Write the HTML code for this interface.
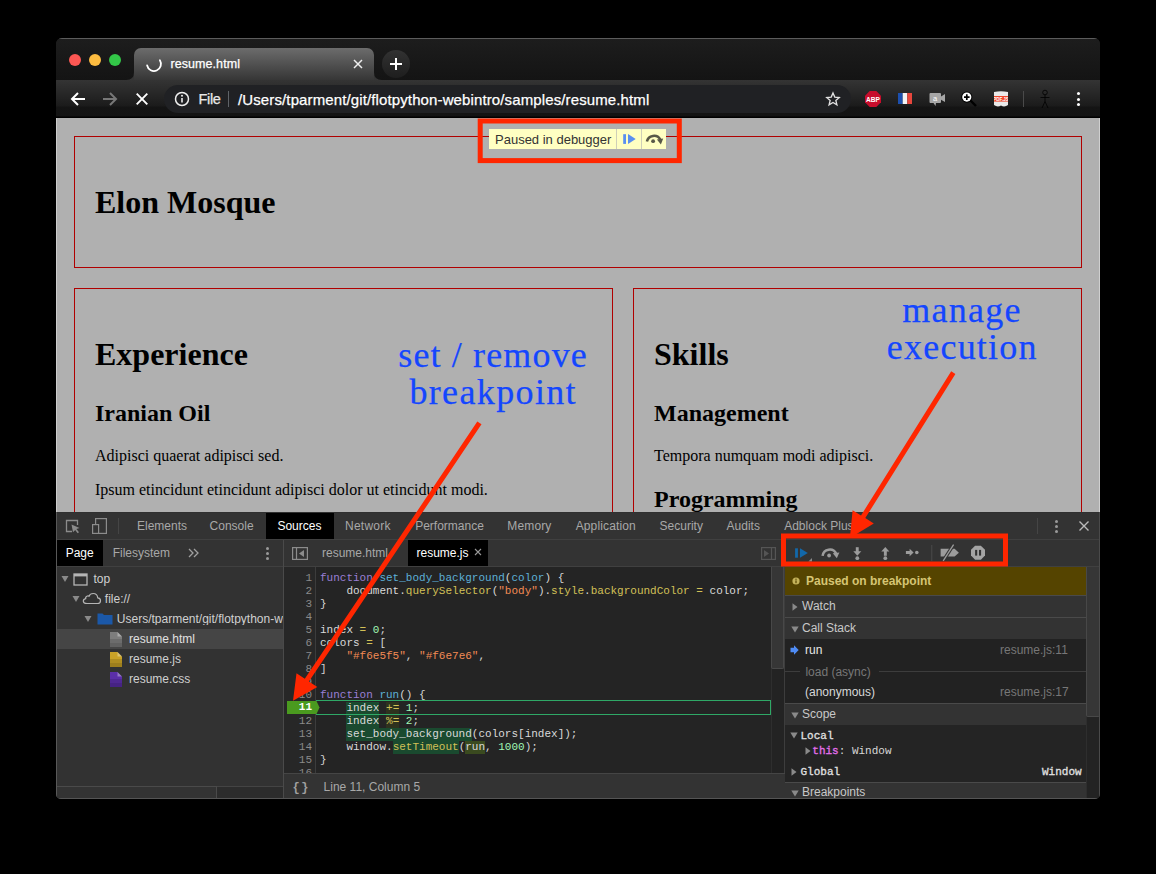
<!DOCTYPE html>
<html>
<head>
<meta charset="utf-8">
<title>resume.html</title>
<style>
*{box-sizing:border-box;margin:0;padding:0}
html,body{width:1156px;height:874px;background:#000;overflow:hidden}
body{position:relative;font-family:"Liberation Sans",sans-serif}
#win{position:absolute;left:56px;top:38px;width:1044px;height:761px;border-radius:6px 6px 5px 5px;overflow:hidden;background:#1c1c1c}
.abs{position:absolute}
.t{position:absolute;white-space:pre;line-height:1}
#code{font-family:"Liberation Mono",monospace;font-size:11px;line-height:13px}
.ln{position:absolute;left:0;width:28px;text-align:right;color:#8a8a8a;white-space:pre}
.cl{position:absolute;left:36px;white-space:pre;color:#d5d5d5}
.cl span{display:inline-block;height:13px}
</style>
</head>
<body>
<div id="win">
<div class="abs" style="left:0px;top:0px;width:1044px;height:42px;background:linear-gradient(#1d1d1d,#141414);border-top:1px solid #5c5c5c"></div>
<div class="abs" style="left:13px;top:16px;width:12px;height:12px;border-radius:50%;background:#fc5753"></div>
<div class="abs" style="left:33px;top:16px;width:12px;height:12px;border-radius:50%;background:#fdbc40"></div>
<div class="abs" style="left:53px;top:16px;width:12px;height:12px;border-radius:50%;background:#33c748"></div>
<div class="abs" style="left:78px;top:10px;width:240px;height:32px;border-radius:7px 7px 0 0;background:linear-gradient(#6c6c6c,#363636)"></div>
<svg class="abs" style="left:70px;top:34px;" width="8" height="8" viewBox="0 0 8 8"><path d="M0 8 Q8 8 8 0 V8 Z" fill="#353535"/></svg>
<svg class="abs" style="left:318px;top:34px;" width="8" height="8" viewBox="0 0 8 8"><path d="M8 8 Q0 8 0 0 V8 Z" fill="#353535"/></svg>
<svg class="abs" style="left:89px;top:17px;" width="18" height="18" viewBox="0 0 18 18"><path d="M14.87 5.19 A7 7 0 1 1 2.15 10.46" fill="none" stroke="#fff" stroke-width="1.8" stroke-linecap="round"/></svg>
<div class="t" id="tabtitle" style="left:114.5px;top:19.72px;font-size:12.5px;font-family:'Liberation Sans',sans-serif;color:#fff;letter-spacing:0.065px;-webkit-text-stroke:0.25px #fff;">resume.html</div>
<svg class="abs" style="left:297px;top:21px;" width="10" height="10" viewBox="0 0 10 10"><path d="M1 1 L9 9 M9 1 L1 9" stroke="#eee" stroke-width="1.5" fill="none"/></svg>
<div class="abs" style="left:326px;top:12px;width:28px;height:28px;border-radius:50%;background:linear-gradient(#323232,#1e1e1e)"></div>
<svg class="abs" style="left:334px;top:20px;" width="12" height="12" viewBox="0 0 12 12"><path d="M6 0 V12 M0 6 H12" stroke="#fff" stroke-width="2" fill="none"/></svg>
<div class="abs" style="left:0px;top:42px;width:1044px;height:38px;background:linear-gradient(#343434 0,#1b1b1b 26px,#141414 27px,#131313 36px,#000 37px)"></div>
<svg class="abs" style="left:14px;top:53px;" width="16" height="16" viewBox="0 0 16 16"><path d="M15 8 H2 M8 2 L2 8 L8 14" stroke="#fff" stroke-width="2" fill="none"/></svg>
<svg class="abs" style="left:46px;top:53px;" width="16" height="16" viewBox="0 0 16 16"><path d="M1 8 H14 M8 2 L14 8 L8 14" stroke="#777" stroke-width="2" fill="none"/></svg>
<svg class="abs" style="left:80px;top:55px;" width="12" height="12" viewBox="0 0 12 12"><path d="M0.7 0.7 L11.3 11.3 M11.3 0.7 L0.7 11.3" stroke="#fff" stroke-width="1.9" fill="none"/></svg>
<div class="abs" style="left:108px;top:47px;width:687px;height:28px;border-radius:14px;background:#202124"></div>
<svg class="abs" style="left:118px;top:53px;" width="16" height="16" viewBox="0 0 16 16"><circle cx="8" cy="8" r="6.5" fill="none" stroke="#eee" stroke-width="1.5"/><path d="M8 7 V11.5" stroke="#eee" stroke-width="1.6"/><circle cx="8" cy="4.8" r="1" fill="#eee"/></svg>
<div class="t" id="file" style="left:142.5px;top:54.03px;font-size:14.5px;font-family:'Liberation Sans',sans-serif;color:#e8e8e8;letter-spacing:-0.344px;-webkit-text-stroke:0.25px #e8e8e8;">File</div>
<div class="abs" style="left:172px;top:53px;width:1px;height:16px;background:#5f6368"></div>
<div class="t" id="url" style="left:182px;top:53.60px;font-size:15px;font-family:'Liberation Sans',sans-serif;color:#fff;letter-spacing:0.120px;-webkit-text-stroke:0.25px #fff;">/Users/tparment/git/flotpython-webintro/samples/resume.html</div>
<svg class="abs" style="left:769px;top:53px;" width="16" height="16" viewBox="0 0 18 18"><path d="M9 2.2 L11 6.9 L16 7.3 L12.2 10.6 L13.4 15.6 L9 12.9 L4.6 15.6 L5.8 10.6 L2 7.3 L7 6.9 Z" fill="none" stroke="#e0e0e0" stroke-width="1.5"/></svg>
<svg class="abs" style="left:809px;top:53px;" width="16" height="16" viewBox="0 0 16 16"><path d="M4.7 0 H11.3 L16 4.7 V11.3 L11.3 16 H4.7 L0 11.3 V4.7 Z" fill="#c70d2c"/><text x="8" y="10.6" font-family="Liberation Sans" font-weight="bold" font-size="6.6" fill="#fff" text-anchor="middle">ABP</text></svg>
<svg class="abs" style="left:842px;top:55px;" width="14" height="11" viewBox="0 0 14 11"><rect x="0" y="0" width="4.7" height="11" fill="#1c4fae"/><rect x="4.7" y="0" width="4.6" height="11" fill="#f4f4f4"/><rect x="9.3" y="0" width="4.7" height="11" fill="#e8463c"/></svg>
<svg class="abs" style="left:873px;top:54px;" width="17" height="15" viewBox="0 0 17 15"><path d="M1.5 1 H11 Q12 1 12 2 V4.5 L16 2 V10 L12 7.8 V10 Q12 11 11 11 H7 L6.5 14 L4.5 11 H1.5 Q0.5 11 0.5 10 V2 Q0.5 1 1.5 1 Z" fill="#a6a6a6"/><text x="6.2" y="8.6" font-family="Liberation Sans" font-size="7.5" fill="#fff" text-anchor="middle">a</text></svg>
<svg class="abs" style="left:903px;top:51px;" width="20" height="20" viewBox="0 0 20 20"><path d="M11.5 11.5 L17 17" stroke="#000" stroke-width="2.4"/><circle cx="7.8" cy="8.1" r="5.6" fill="#000"/><circle cx="7.8" cy="8.1" r="4.6" fill="#fff"/><path d="M7.8 5.3 V10.9 M5 8.1 H10.6" stroke="#000" stroke-width="1.7"/></svg>
<svg class="abs" style="left:938px;top:53px;" width="14" height="16" viewBox="0 0 14 16"><path d="M0 1 Q7 -0.5 14 1 V14 Q10.5 16.5 7 14.5 Q3.5 16.5 0 14 Z" fill="#e9e9e9"/><rect x="0" y="5" width="14" height="5.6" fill="#f0452a"/><text x="7" y="9.5" font-family="Liberation Sans" font-weight="bold" font-size="4.6" fill="#fff" text-anchor="middle">PDF.JS</text></svg>
<div class="abs" style="left:967px;top:53px;width:1px;height:16px;background:#4a4a4a"></div>
<svg class="abs" style="left:983px;top:51px;" width="12" height="20" viewBox="0 0 12 20"><circle cx="6" cy="3.5" r="2.3" fill="none" stroke="#000" stroke-width="0.8"/><path d="M6 6 V12.5 M1.5 8.5 H10.5 M6 12.5 L3 19 M6 12.5 L9 19" stroke="#000" stroke-width="0.8" fill="none"/></svg>
<div class="abs" style="left:1021px;top:54px;width:3px;height:3px;border-radius:50%;background:#fff"></div>
<div class="abs" style="left:1021px;top:59.5px;width:3px;height:3px;border-radius:50%;background:#fff"></div>
<div class="abs" style="left:1021px;top:65px;width:3px;height:3px;border-radius:50%;background:#fff"></div>
<div class="abs" style="left:0px;top:80px;width:1044px;height:394px;background:#b0b0b0"></div>
<div class="abs" style="left:18px;top:98px;width:1008px;height:132px;border:1px solid #b00000;"></div>
<div class="abs" style="left:18px;top:250px;width:539px;height:240px;border:1px solid #b00000;"></div>
<div class="abs" style="left:577px;top:250px;width:449px;height:240px;border:1px solid #b00000;"></div>
<div class="t" id="h_elon" style="left:39px;top:148.00px;font-size:32px;font-family:'Liberation Serif',serif;color:#000;font-weight:bold;">Elon Mosque</div>
<div class="t" id="h_exp" style="left:39px;top:299.60px;font-size:32px;font-family:'Liberation Serif',serif;color:#000;font-weight:bold;">Experience</div>
<div class="t" id="h_iran" style="left:39px;top:362.90px;font-size:24px;font-family:'Liberation Serif',serif;color:#000;font-weight:bold;">Iranian Oil</div>
<div class="t" id="p_adip" style="left:39px;top:409.80px;font-size:16px;font-family:'Liberation Serif',serif;color:#000;">Adipisci quaerat adipisci sed.</div>
<div class="t" id="p_ipsum" style="left:39px;top:443.90px;font-size:16px;font-family:'Liberation Serif',serif;color:#000;">Ipsum etincidunt etincidunt adipisci dolor ut etincidunt modi.</div>
<div class="t" id="h_skills" style="left:598px;top:299.60px;font-size:32px;font-family:'Liberation Serif',serif;color:#000;font-weight:bold;">Skills</div>
<div class="t" id="h_mgmt" style="left:598px;top:362.90px;font-size:24px;font-family:'Liberation Serif',serif;color:#000;font-weight:bold;">Management</div>
<div class="t" id="p_temp" style="left:598px;top:409.80px;font-size:16px;font-family:'Liberation Serif',serif;color:#000;">Tempora numquam modi adipisci.</div>
<div class="t" id="h_prog" style="left:598px;top:448.70px;font-size:24px;font-family:'Liberation Serif',serif;color:#000;font-weight:bold;">Programming</div>
<div class="abs" style="left:1043px;top:80px;width:1px;height:394px;background:#cfcfcf"></div>
<div class="abs" style="left:433.3px;top:90.7px;width:177.1px;height:20.4px;background:#ffffc2"></div>
<div class="t" id="paused" style="left:439px;top:94.60px;font-size:13px;font-family:'Liberation Sans',sans-serif;color:#333;">Paused in debugger</div>
<div class="abs" style="left:560.1px;top:90.7px;width:1px;height:20.4px;background:#cfcfb8"></div>
<div class="abs" style="left:585px;top:90.7px;width:1px;height:20.4px;background:#cfcfb8"></div>
<svg class="abs" style="left:560px;top:90px" width="52" height="22" viewBox="616 128 52 22"><rect x="623.2" y="134.2" width="2.8" height="9.7" fill="#5a8ff0"/><path d="M628 134.1 L635.7 139 L628 143.9 Z" fill="#5a8ff0"/><path d="M646.9 141.6 A7.2 7.2 0 0 1 660.3 139.6" fill="none" stroke="#585848" stroke-width="2.5"/><path d="M656.9 139.6 L663.2 138.6 L660.9 144.4 Z" fill="#585848"/><circle cx="653.1" cy="141.2" r="1.9" fill="#585848"/></svg>
<div class="abs" style="left:0px;top:474px;width:1044px;height:287px;background:#242424"></div>
<div class="abs" style="left:0px;top:474px;width:1044px;height:28px;background:#333333;border-top:1px solid #303030;border-bottom:1px solid #404040"></div>
<svg class="abs" style="left:9px;top:480px;" width="16" height="16" viewBox="0 0 16 16"><path d="M7 13.5 H1.5 V2.5 H12.5 V7" fill="none" stroke="#8c8c8c" stroke-width="1.3"/><path d="M6.5 6.5 L14.5 10 L11.4 11 L14 14.3 L12.6 15.3 L10.2 12 L8 14.2 Z" fill="#8c8c8c"/></svg>
<svg class="abs" style="left:35px;top:479px;" width="17" height="18" viewBox="0 0 17 18"><rect x="4.6" y="1.6" width="10.8" height="14.8" fill="none" stroke="#8c8c8c" stroke-width="1.2"/><rect x="1.6" y="7.6" width="6" height="8.8" fill="#333" stroke="#8c8c8c" stroke-width="1.2"/></svg>
<div class="abs" style="left:62px;top:480px;width:1px;height:16px;background:#454545"></div>
<div class="t" id="mt0" style="left:81px;top:481.64px;font-size:12px;font-family:'Liberation Sans',sans-serif;color:#a8a8a8;">Elements</div>
<div class="t" id="mt1" style="left:153.6px;top:481.64px;font-size:12px;font-family:'Liberation Sans',sans-serif;color:#a8a8a8;">Console</div>
<div class="t" id="mt2" style="left:289.1px;top:481.64px;font-size:12px;font-family:'Liberation Sans',sans-serif;color:#a8a8a8;letter-spacing:0.212px;">Network</div>
<div class="t" id="mt3" style="left:359.2px;top:481.64px;font-size:12px;font-family:'Liberation Sans',sans-serif;color:#a8a8a8;">Performance</div>
<div class="t" id="mt4" style="left:451.3px;top:481.64px;font-size:12px;font-family:'Liberation Sans',sans-serif;color:#a8a8a8;letter-spacing:0.143px;">Memory</div>
<div class="t" id="mt5" style="left:519.7px;top:481.64px;font-size:12px;font-family:'Liberation Sans',sans-serif;color:#a8a8a8;letter-spacing:0.126px;">Application</div>
<div class="t" id="mt6" style="left:603.6px;top:481.64px;font-size:12px;font-family:'Liberation Sans',sans-serif;color:#a8a8a8;">Security</div>
<div class="t" id="mt7" style="left:670.6px;top:481.64px;font-size:12px;font-family:'Liberation Sans',sans-serif;color:#a8a8a8;">Audits</div>
<div class="t" id="mt8" style="left:728.2px;top:481.64px;font-size:12px;font-family:'Liberation Sans',sans-serif;color:#a8a8a8;">Adblock Plus</div>
<div class="abs" style="left:210px;top:475px;width:68px;height:26px;background:#000"></div>
<div class="t" id="mt_src" style="left:221.4px;top:481.64px;font-size:12px;font-family:'Liberation Sans',sans-serif;color:#fff;">Sources</div>
<div class="abs" style="left:981px;top:480px;width:1px;height:16px;background:#454545"></div>
<div class="abs" style="left:998.5px;top:481.5px;width:3px;height:3px;border-radius:50%;background:#9a9a9a"></div>
<div class="abs" style="left:998.5px;top:486.5px;width:3px;height:3px;border-radius:50%;background:#9a9a9a"></div>
<div class="abs" style="left:998.5px;top:491.5px;width:3px;height:3px;border-radius:50%;background:#9a9a9a"></div>
<svg class="abs" style="left:1022px;top:482px;" width="12" height="12" viewBox="0 0 12 12"><path d="M1.5 1.5 L10.5 10.5 M10.5 1.5 L1.5 10.5" stroke="#bbb" stroke-width="1.4" fill="none"/></svg>
<div class="abs" style="left:0px;top:502px;width:1044px;height:27px;background:#333333;border-bottom:1px solid #404040"></div>
<div class="abs" style="left:0px;top:502px;width:47px;height:26px;background:#000"></div>
<div class="t" id="nt_page" style="left:9.7px;top:509.14px;font-size:12px;font-family:'Liberation Sans',sans-serif;color:#fff;">Page</div>
<div class="t" id="nt_fs" style="left:56.7px;top:509.14px;font-size:12px;font-family:'Liberation Sans',sans-serif;color:#a8a8a8;">Filesystem</div>
<svg class="abs" style="left:132px;top:510px;" width="11" height="10" viewBox="0 0 11 10"><path d="M1 1 L5 5 L1 9 M6 1 L10 5 L6 9" stroke="#a0a0a0" stroke-width="1.3" fill="none"/></svg>
<div class="abs" style="left:210px;top:508.5px;width:3px;height:3px;border-radius:50%;background:#9a9a9a"></div>
<div class="abs" style="left:210px;top:513.5px;width:3px;height:3px;border-radius:50%;background:#9a9a9a"></div>
<div class="abs" style="left:210px;top:518.5px;width:3px;height:3px;border-radius:50%;background:#9a9a9a"></div>
<div class="abs" style="left:0px;top:529px;width:227px;height:232px;background:#323232"></div>
<div class="abs" style="left:227px;top:502px;width:1px;height:259px;background:#4a4a4a"></div>
<div class="abs" style="left:0px;top:591px;width:227px;height:20px;background:#454545"></div>
<svg class="abs" style="left:5px;top:537px;" width="8" height="8" viewBox="0 0 8 8"><path d="M0.5 1 H7.5 L4 7 Z" fill="#8a8a8a"/></svg>
<svg class="abs" style="left:17px;top:535px;" width="15" height="13" viewBox="0 0 15 13"><rect x="1" y="1" width="13" height="11" fill="none" stroke="#b5b5b5" stroke-width="1.3"/><rect x="1" y="1" width="13" height="2.4" fill="#b5b5b5"/></svg>
<div class="t" id="tr_top" style="left:37.4px;top:535.14px;font-size:12px;font-family:'Liberation Sans',sans-serif;color:#d0d0d0;">top</div>
<svg class="abs" style="left:16px;top:557px;" width="8" height="8" viewBox="0 0 8 8"><path d="M0.5 1 H7.5 L4 7 Z" fill="#8a8a8a"/></svg>
<svg class="abs" style="left:26px;top:553px;" width="20" height="14" viewBox="0 0 20 14"><path d="M5 12.5 H15.5 Q18.5 12.5 18.5 9.7 Q18.5 7 15.7 6.8 Q15.3 2.5 11.2 2.5 Q8 2.5 7 5.2 Q6.3 4.8 5.4 5 Q3.3 5.5 3.7 7.6 Q1.3 8 1.3 10.2 Q1.5 12.5 5 12.5 Z" fill="none" stroke="#b5b5b5" stroke-width="1.2"/></svg>
<div class="t" id="tr_file" style="left:48.8px;top:555.14px;font-size:12px;font-family:'Liberation Sans',sans-serif;color:#d0d0d0;">file://</div>
<svg class="abs" style="left:28px;top:577px;" width="8" height="8" viewBox="0 0 8 8"><path d="M0.5 1 H7.5 L4 7 Z" fill="#8a8a8a"/></svg>
<svg class="abs" style="left:41px;top:574px;" width="16" height="13" viewBox="0 0 16 13"><path d="M0.5 1.5 H5.5 L7 3 H15.5 V12.5 H0.5 Z" fill="#1b58a8"/></svg>
<div class="t" id="tr_users" style="left:60.8px;top:575.14px;font-size:12px;font-family:'Liberation Sans',sans-serif;color:#d0d0d0;width:166px;overflow:hidden;">Users/tparment/git/flotpython-webintro/samples</div>
<svg class="abs" style="left:54px;top:593.5px;" width="12" height="15" viewBox="0 0 12 15"><path d="M0 0 H7.5 L12 4.5 V15 H0 Z" fill="#7d7d7d"/><path d="M0 7 H12 V15 H0 Z" fill="#000" fill-opacity="0.13"/><path d="M0 11 H12 V15 H0 Z" fill="#000" fill-opacity="0.1"/><path d="M7.5 0 V4.5 H12 Z" fill="#fff" fill-opacity="0.35"/></svg>
<div class="t" id="tr_html" style="left:73px;top:595.14px;font-size:12px;font-family:'Liberation Sans',sans-serif;color:#e0e0e0;">resume.html</div>
<svg class="abs" style="left:54px;top:613.5px;" width="12" height="15" viewBox="0 0 12 15"><path d="M0 0 H7.5 L12 4.5 V15 H0 Z" fill="#c9a227"/><path d="M0 7 H12 V15 H0 Z" fill="#000" fill-opacity="0.13"/><path d="M0 11 H12 V15 H0 Z" fill="#000" fill-opacity="0.1"/><path d="M7.5 0 V4.5 H12 Z" fill="#fff" fill-opacity="0.35"/></svg>
<div class="t" id="tr_js" style="left:73px;top:615.14px;font-size:12px;font-family:'Liberation Sans',sans-serif;color:#d0d0d0;">resume.js</div>
<svg class="abs" style="left:54px;top:633.5px;" width="12" height="15" viewBox="0 0 12 15"><path d="M0 0 H7.5 L12 4.5 V15 H0 Z" fill="#5b2fa8"/><path d="M0 7 H12 V15 H0 Z" fill="#000" fill-opacity="0.13"/><path d="M0 11 H12 V15 H0 Z" fill="#000" fill-opacity="0.1"/><path d="M7.5 0 V4.5 H12 Z" fill="#fff" fill-opacity="0.35"/></svg>
<div class="t" id="tr_css" style="left:73px;top:635.14px;font-size:12px;font-family:'Liberation Sans',sans-serif;color:#d0d0d0;">resume.css</div>
<div class="abs" style="left:0px;top:748px;width:227px;height:13px;background:#2c2c2c;border-top:1px solid #444"></div>
<div class="abs" style="left:0px;top:748px;width:161px;height:13px;background:#333;border-top:1px solid #4a4a4a;border-right:1px solid #4a4a4a"></div>
<svg class="abs" style="left:236px;top:509px;" width="16" height="13" viewBox="0 0 16 13"><rect x="0.6" y="0.6" width="14.8" height="11.8" fill="none" stroke="#8c8c8c" stroke-width="1.2"/><path d="M4.5 0.6 V12.4" stroke="#8c8c8c" stroke-width="1.2"/><path d="M12 3 V10 L7 6.5 Z" fill="#8c8c8c"/></svg>
<div class="t" id="ft_html" style="left:266px;top:509.14px;font-size:12px;font-family:'Liberation Sans',sans-serif;color:#a8a8a8;">resume.html</div>
<div class="abs" style="left:352px;top:502px;width:80px;height:26px;background:#000"></div>
<div class="t" id="ft_js" style="left:360.5px;top:509.14px;font-size:12px;font-family:'Liberation Sans',sans-serif;color:#fff;">resume.js</div>
<svg class="abs" style="left:418px;top:510px;" width="8" height="8" viewBox="0 0 8 8"><path d="M1 1 L7 7 M7 1 L1 7" stroke="#999" stroke-width="1.1" fill="none"/></svg>
<svg class="abs" style="left:705px;top:509px;" width="15" height="13" viewBox="0 0 15 13"><rect x="0.6" y="0.6" width="13.8" height="11.8" fill="none" stroke="#555" stroke-width="1.2"/><path d="M10.5 0.6 V12.4" stroke="#555" stroke-width="1.2"/><path d="M3 3 V10 L8 6.5 Z" fill="#555"/></svg>
<div class="abs" style="left:228px;top:529px;width:487px;height:206px;background:#242424"></div>
<div class="abs" style="left:228px;top:529px;width:32px;height:206px;background:#272727;border-right:1px solid #3c3c3c"></div>
<div class="abs" style="left:715px;top:529px;width:14px;height:206px;background:#232323;border-left:1px solid #2e2e2e"></div>
<div class="abs" style="left:715px;top:529px;width:13px;height:101.5px;background:#363636;border:1px solid #484848;border-top:none;border-radius:0 0 2px 2px"></div>
<div class="abs" style="left:728px;top:502px;width:1px;height:259px;background:#3d3d3d"></div>
<div class="abs" id="code" style="left:228px;top:529px;width:487px;height:206px;overflow:hidden"><div class="ln" style="top:4.5px">1</div><div class="cl" style="top:4.5px"><span style="color:#9a7fd5;">function</span><span style="color:#d5d5d5;"> </span><span style="color:#5db0d7;">set_body_background</span><span style="color:#d5d5d5;">(</span><span style="color:#5db0d7;">color</span><span style="color:#d5d5d5;">) {</span></div><div class="ln" style="top:17.5px">2</div><div class="cl" style="top:17.5px"><span style="color:#d9d9d9;">    document</span><span style="color:#d5d5d5;">.</span><span style="color:#d2c057;">querySelector</span><span style="color:#d5d5d5;">(</span><span style="color:#f28b54;">"body"</span><span style="color:#d5d5d5;">).</span><span style="color:#d2c057;">style</span><span style="color:#d5d5d5;">.</span><span style="color:#d2c057;">backgroundColor</span><span style="color:#d5d5d5;"> </span><span style="color:#d2c057;">=</span><span style="color:#d9d9d9;"> color;</span></div><div class="ln" style="top:30.5px">3</div><div class="cl" style="top:30.5px"><span style="color:#d5d5d5;">}</span></div><div class="ln" style="top:43.5px">4</div><div class="cl" style="top:43.5px"></div><div class="ln" style="top:56.5px">5</div><div class="cl" style="top:56.5px"><span style="color:#d9d9d9;">index </span><span style="color:#d2c057;">=</span><span style="color:#d5d5d5;"> </span><span style="color:#a1f7b5;">0</span><span style="color:#d5d5d5;">;</span></div><div class="ln" style="top:69.5px">6</div><div class="cl" style="top:69.5px"><span style="color:#d9d9d9;">colors </span><span style="color:#d2c057;">=</span><span style="color:#d5d5d5;"> [</span></div><div class="ln" style="top:82.5px">7</div><div class="cl" style="top:82.5px"><span style="color:#d5d5d5;">    </span><span style="color:#f28b54;">"#f6e5f5"</span><span style="color:#d5d5d5;">, </span><span style="color:#f28b54;">"#f6e7e6"</span><span style="color:#d5d5d5;">,</span></div><div class="ln" style="top:95.5px">8</div><div class="cl" style="top:95.5px"><span style="color:#d5d5d5;">]</span></div><div class="ln" style="top:108.5px">9</div><div class="cl" style="top:108.5px"></div><div class="ln" style="top:121.5px">10</div><div class="cl" style="top:121.5px"><span style="color:#9a7fd5;">function</span><span style="color:#d5d5d5;"> </span><span style="color:#5db0d7;">run</span><span style="color:#d5d5d5;">() {</span></div><div class="ln" style="top:134.5px">11</div><div class="cl" style="top:134.5px"><span style="color:#d5d5d5;">    </span><span style="color:#d9d9d9;background:#1a4a2f;">index</span><span style="color:#d5d5d5;"> </span><span style="color:#d2c057;background:#2e321e;">+=</span><span style="color:#d5d5d5;"> </span><span style="color:#a1f7b5;">1</span><span style="color:#d5d5d5;">;</span></div><div class="ln" style="top:147.5px">12</div><div class="cl" style="top:147.5px"><span style="color:#d5d5d5;">    </span><span style="color:#d9d9d9;background:#1a4a2f;">index</span><span style="color:#d5d5d5;"> </span><span style="color:#d2c057;background:#2e321e;">%=</span><span style="color:#d5d5d5;"> </span><span style="color:#a1f7b5;">2</span><span style="color:#d5d5d5;">;</span></div><div class="ln" style="top:160.5px">13</div><div class="cl" style="top:160.5px"><span style="color:#d5d5d5;">    </span><span style="color:#d9d9d9;background:#1a4a2f;">set_body_background</span><span style="color:#d9d9d9;">(colors[index]);</span></div><div class="ln" style="top:173.5px">14</div><div class="cl" style="top:173.5px"><span style="color:#d9d9d9;">    window.</span><span style="color:#d2c057;background:#1a4a2f;">setTimeout</span><span style="color:#d5d5d5;">(</span><span style="color:#d9d9d9;background:#3a4a1f;">run</span><span style="color:#d5d5d5;">, </span><span style="color:#a1f7b5;">1000</span><span style="color:#d5d5d5;">);</span></div><div class="ln" style="top:186.5px">15</div><div class="cl" style="top:186.5px"><span style="color:#d5d5d5;">}</span></div><div class="ln" style="top:199.5px">16</div><div class="cl" style="top:199.5px"></div><div class="abs" style="left:32px;top:133px;width:455px;height:15px;border:1px solid #2fa866;border-left:none"></div><svg class="abs" style="left:3px;top:134px" width="33" height="13" viewBox="0 0 33 13"><path d="M0 0 H29.5 L32.5 6.5 L29.5 13 H0 Z" fill="#4a9a1f"/></svg><div class="ln" style="top:134px;color:#fff;font-weight:bold">11</div></div>
<div class="abs" style="left:228px;top:735px;width:501px;height:26px;background:#333333;border-top:1px solid #454545"></div>
<div class="t" id="st_br" style="left:236.5px;top:743.80px;font-size:12px;font-family:'Liberation Mono',monospace;color:#a0a0a0;font-weight:bold;letter-spacing:1.5px;">{}</div>
<div class="t" id="st_line" style="left:267.6px;top:743.24px;font-size:12px;font-family:'Liberation Sans',sans-serif;color:#a8a8a8;">Line 11, Column 5</div>
<svg class="abs" style="left:730px;top:502px" width="214" height="26" viewBox="786 540 214 26"><rect x="795.1" y="548.3" width="2.8" height="9.4" fill="#1268aa"/><path d="M800 548.2 L807.8 553 L800 557.8 Z" fill="#1268aa"/><path d="M812 558 V561.4 H808.4 Z" fill="#8a8a8a"/><path d="M822.6 555.8 A7.2 7.2 0 0 1 836.2 553.6" fill="none" stroke="#9c9c9c" stroke-width="2.5"/><path d="M832.8 553.2 L839.4 552.4 L836.8 558.2 Z" fill="#9c9c9c"/><circle cx="829.1" cy="555.5" r="1.9" fill="#9c9c9c"/><rect x="855.8" y="547.2" width="2.9" height="5" fill="#9c9c9c"/><path d="M853.3 551.3 H861.3 L857.3 555.8 Z" fill="#9c9c9c"/><circle cx="857.3" cy="558.2" r="1.9" fill="#9c9c9c"/><rect x="883.9" y="551" width="2.9" height="4.8" fill="#9c9c9c"/><path d="M881.3 551.4 H889.3 L885.3 546.9 Z" fill="#9c9c9c"/><circle cx="885.3" cy="558.2" r="1.9" fill="#9c9c9c"/><rect x="905.9" y="551" width="4.6" height="3" fill="#9c9c9c"/><path d="M909.6 548.7 V556.3 L913.6 552.5 Z" fill="#9c9c9c"/><circle cx="916.8" cy="552.5" r="1.8" fill="#9c9c9c"/><rect x="931.3" y="545" width="1" height="16" fill="#4a4a4a"/><path d="M940.6 548.8 H954.6 L958.9 552.7 L954.6 556.6 H940.6 Z" fill="#9c9c9c"/><path d="M943 561.1 L953.8 544.4" stroke="#333" stroke-width="3.4"/><path d="M943.2 560.8 L953.6 544.7" stroke="#9c9c9c" stroke-width="1.3"/><path d="M975.1 545.7 H980.9 L985 549.8 V555.6 L980.9 559.7 H975.1 L971 555.6 V549.8 Z" fill="#a4a4a4"/><rect x="975.1" y="549.9" width="2.1" height="5.7" fill="#333"/><rect x="979" y="549.9" width="2.1" height="5.7" fill="#333"/></svg>
<div class="abs" style="left:729px;top:529px;width:301px;height:232px;background:#242424"></div>
<div class="abs" style="left:1030px;top:529px;width:14px;height:232px;background:#232323;border-left:1px solid #2e2e2e"></div>
<div class="abs" style="left:1030px;top:529px;width:13.5px;height:149.5px;background:#363636;border:1px solid #484848;border-top:none;border-radius:0 0 2px 2px"></div>
<div class="abs" style="left:729px;top:529px;width:301px;height:28px;background:#554400"></div>
<svg class="abs" style="left:736px;top:539px;" width="8" height="8" viewBox="0 0 8 8"><circle cx="4" cy="4" r="3.6" fill="#c4b25a"/><rect x="3.4" y="3.4" width="1.2" height="2.8" fill="#554400"/><rect x="3.4" y="1.7" width="1.2" height="1.1" fill="#554400"/></svg>
<div class="t" id="pb" style="left:750px;top:536.64px;font-size:12px;font-family:'Liberation Sans',sans-serif;color:#d6c574;font-weight:bold;">Paused on breakpoint</div>
<div class="abs" style="left:729px;top:557px;width:301px;height:22px;background:#333333;border-top:1px solid #4a4a4a"></div>
<svg class="abs" style="left:736px;top:564.5px;" width="6" height="8" viewBox="0 0 6 8"><path d="M0.5 0.3 V7.7 L5.5 4 Z" fill="#8a8a8a"/></svg>
<div class="t" id="hd_watch" style="left:746px;top:561.64px;font-size:12px;font-family:'Liberation Sans',sans-serif;color:#c8c8c8;">Watch</div>
<div class="abs" style="left:729px;top:579px;width:301px;height:22px;background:#333333;border-top:1px solid #4a4a4a"></div>
<svg class="abs" style="left:735px;top:587.5px;" width="8" height="7" viewBox="0 0 8 7"><path d="M0.3 0.5 H7.7 L4 6.5 Z" fill="#8a8a8a"/></svg>
<div class="t" id="hd_cs" style="left:746px;top:583.64px;font-size:12px;font-family:'Liberation Sans',sans-serif;color:#c8c8c8;">Call Stack</div>
<div class="abs" style="left:729px;top:601px;width:301px;height:64px;background:#222222"></div>
<svg class="abs" style="left:734px;top:607px;" width="9" height="10" viewBox="0 0 9 10"><path d="M0.5 2.7 H4 V0.3 L8.7 5 L4 9.7 V7.3 H0.5 Z" fill="#4f8cf5"/></svg>
<div class="t" id="cs_run" style="left:749px;top:605.84px;font-size:12px;font-family:'Liberation Sans',sans-serif;color:#e8e8e8;">run</div>
<div class="t" id="cs_l11" style="left:944px;top:605.84px;font-size:12px;font-family:'Liberation Sans',sans-serif;color:#777;">resume.js:11</div>
<div class="abs" style="left:729px;top:633px;width:15px;height:1px;background:#3d3d3d"></div>
<div class="t" id="cs_load" style="left:749.4px;top:627.84px;font-size:12px;font-family:'Liberation Sans',sans-serif;color:#777;">load (async)</div>
<div class="abs" style="left:823px;top:633px;width:207px;height:1px;background:#3d3d3d"></div>
<div class="t" id="cs_anon" style="left:749px;top:647.84px;font-size:12px;font-family:'Liberation Sans',sans-serif;color:#d8d8d8;">(anonymous)</div>
<div class="t" id="cs_l17" style="left:944px;top:647.84px;font-size:12px;font-family:'Liberation Sans',sans-serif;color:#777;">resume.js:17</div>
<div class="abs" style="left:729px;top:665px;width:301px;height:22px;background:#333333;border-top:1px solid #4a4a4a"></div>
<svg class="abs" style="left:735px;top:673.5px;" width="8" height="7" viewBox="0 0 8 7"><path d="M0.3 0.5 H7.7 L4 6.5 Z" fill="#8a8a8a"/></svg>
<div class="t" id="hd_scope" style="left:746px;top:669.64px;font-size:12px;font-family:'Liberation Sans',sans-serif;color:#c8c8c8;">Scope</div>
<svg class="abs" style="left:734px;top:693.5px;" width="8" height="7" viewBox="0 0 8 7"><path d="M0.3 0.5 H7.7 L4 6.5 Z" fill="#8a8a8a"/></svg>
<div class="t" id="sc_local" style="left:744.5px;top:692.87px;font-size:11px;font-family:'Liberation Mono',monospace;color:#e0e0e0;-webkit-text-stroke:0.3px #e0e0e0;">Local</div>
<svg class="abs" style="left:749px;top:708.5px;" width="6" height="8" viewBox="0 0 6 8"><path d="M0.5 0.3 V7.7 L5.5 4 Z" fill="#8a8a8a"/></svg>
<div class="t" id="sc_this" style="left:756.3px;top:707.77px;font-size:11px;font-family:'Liberation Mono',monospace;color:#d8d8d8;"><span style="color:#e36eec;-webkit-text-stroke:0.3px #e36eec">this</span>: Window</div>
<svg class="abs" style="left:734.5px;top:729.5px;" width="6" height="8" viewBox="0 0 6 8"><path d="M0.5 0.3 V7.7 L5.5 4 Z" fill="#8a8a8a"/></svg>
<div class="t" id="sc_global" style="left:744.5px;top:728.77px;font-size:11px;font-family:'Liberation Mono',monospace;color:#e0e0e0;-webkit-text-stroke:0.3px #e0e0e0;">Global</div>
<div class="t" id="sc_win" style="left:986px;top:728.77px;font-size:11px;font-family:'Liberation Mono',monospace;color:#e0e0e0;-webkit-text-stroke:0.3px #e0e0e0;">Window</div>
<div class="abs" style="left:729px;top:743.5px;width:301px;height:18px;background:#333333;border-top:1px solid #4a4a4a"></div>
<svg class="abs" style="left:735px;top:752px;" width="8" height="7" viewBox="0 0 8 7"><path d="M0.3 0.5 H7.7 L4 6.5 Z" fill="#8a8a8a"/></svg>
<div class="t" id="hd_bp" style="left:746px;top:748.14px;font-size:12px;font-family:'Liberation Sans',sans-serif;color:#c8c8c8;">Breakpoints</div>
<svg class="abs" style="left:0;top:0" width="1044" height="761" viewBox="0 0 1044 761"><rect x="424.2" y="83.0" width="199.1" height="39.6" fill="none" stroke="#ff2600" stroke-width="5"/><rect x="727.5" y="498.0" width="222.0" height="28.0" fill="none" stroke="#ff2600" stroke-width="5"/><polygon points="421.3,383.5 248.8,640.7 240.5,635.2 237.0,662.8 261.3,649.1 252.9,643.5 425.5,386.3" fill="#ff2600"/><polygon points="895.2,333.3 805.0,477.5 796.6,472.2 793.9,500.0 817.8,485.4 809.3,480.1 899.4,335.9" fill="#ff2600"/></svg>
<div class="t" id="an_set" style="left:342.3px;top:298.65px;font-size:36px;font-family:'Liberation Serif',serif;color:#1446ff;letter-spacing:1.137px;-webkit-text-stroke:0.25px #1446ff;">set / remove</div>
<div class="t" id="an_bp" style="left:353.4px;top:336.15px;font-size:36px;font-family:'Liberation Serif',serif;color:#1446ff;letter-spacing:1.365px;-webkit-text-stroke:0.25px #1446ff;">breakpoint</div>
<div class="t" id="an_man" style="left:846.2px;top:253.85px;font-size:36px;font-family:'Liberation Serif',serif;color:#1446ff;letter-spacing:1.260px;-webkit-text-stroke:0.25px #1446ff;">manage</div>
<div class="t" id="an_exe" style="left:830.8px;top:290.85px;font-size:36px;font-family:'Liberation Serif',serif;color:#1446ff;letter-spacing:1.227px;-webkit-text-stroke:0.25px #1446ff;">execution</div>
<div class="abs" style="left:0px;top:80px;width:1px;height:394px;background:#cdcdcd"></div>
<div class="abs" style="left:0px;top:474px;width:1px;height:287px;background:#585858"></div>
<div class="abs" style="left:1043px;top:474px;width:1px;height:287px;background:#4a4a4a"></div>
<div class="abs" style="left:0px;top:760px;width:1044px;height:1px;background:#555"></div>
</div>
</body>
</html>
